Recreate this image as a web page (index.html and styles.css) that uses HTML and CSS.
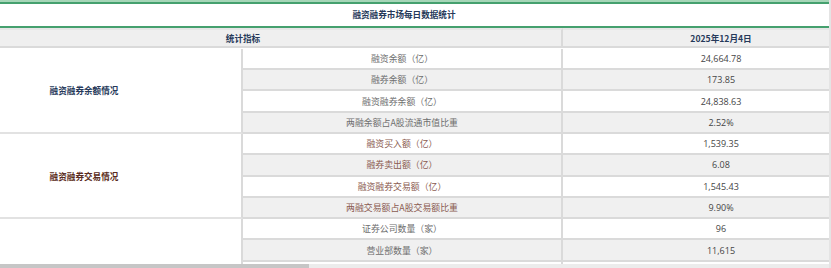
FILE: index.html
```html
<!DOCTYPE html>
<html lang="zh-CN">
<head>
<meta charset="utf-8">
<title>融资融券市场每日数据统计</title>
<link rel="stylesheet" href="styles.css">
</head>
<body>
<div class="frame">
  <div class="scroller">
    <div class="top-strip"></div>
    <div class="sheet" role="table">
      <div class="title" role="row"><span role="columnheader">融资融券市场每日数据统计</span></div>
      <div class="grid">
        <div class="hd span2" role="columnheader">统计指标</div>
        <div class="hd" role="columnheader">2025年12月4日</div>

        <div class="group g1 r4">融资融券余额情况</div>
        <div class="name n1">融资余额（亿）</div><div class="val">24,664.78</div>
        <div class="name n1 alt">融券余额（亿）</div><div class="val alt">173.85</div>
        <div class="name n1">融资融券余额（亿）</div><div class="val">24,838.63</div>
        <div class="name n1 alt">两融余额占A股流通市值比重</div><div class="val alt">2.52%</div>

        <div class="group g2 r4">融资融券交易情况</div>
        <div class="name n2">融资买入额（亿）</div><div class="val">1,539.35</div>
        <div class="name n2 alt">融券卖出额（亿）</div><div class="val alt">6.08</div>
        <div class="name n2">融资融券交易额（亿）</div><div class="val">1,545.43</div>
        <div class="name n2 alt">两融交易额占A股交易额比重</div><div class="val alt">9.90%</div>

        <div class="group g1 r3"></div>
        <div class="name n1">证券公司数量（家）</div><div class="val">96</div>
        <div class="name n1 alt">营业部数量（家）</div><div class="val alt">11,615</div>
        <div class="name n1"></div><div class="val"></div>
      </div>
    </div>
  </div>
  <div class="hscroll"><div class="thumb"></div></div>
</div>
</body>
</html>
```
FILE: styles.css
```css
html, body {
  margin: 0;
  padding: 0;
  background: #ffffff;
  overflow: hidden;
}

.frame {
  width: 829px;
  height: 268px;
  border-right: 2px solid #e4e4e4;
  display: flex;
  flex-direction: column;
  overflow: hidden;
}

.scroller {
  flex: 1;
  min-height: 0;
  overflow: hidden;
}

.top-strip {
  height: 2px;
  background: #a6d6b8;
}

.sheet {
  width: 954px;
  margin-left: -75px;
  font-family: "Noto Sans CJK SC", "Noto Sans", sans-serif;
}

.title {
  box-sizing: border-box;
  height: 25.5px;
  border-top: 2px solid #45a06e;
  border-bottom: 2px solid #45a06e;
  display: flex;
  align-items: center;
  justify-content: center;
  padding-left: 4px;
  padding-bottom: 1px;
  font-size: 8.6px;
  font-weight: 700;
  color: #26395a;
}

.grid {
  display: grid;
  grid-template-columns: 318px 320px 316px;
  grid-auto-rows: 21.3px;
}

.grid > div {
  box-sizing: border-box;
  display: flex;
  align-items: center;
  justify-content: center;
  border-bottom: 2px solid #dadada;
  white-space: nowrap;
}

.hd {
  height: 20.5px;
  border-top: 2px solid #e6e6e6;
  background: #efefef;
  font-size: 8.6px;
  font-weight: 700;
  color: #26395a;
  padding-top: 1px;
}

.span2 {
  grid-column: span 2;
  border-right: 2px solid #dadada;
}

.group {
  border-right: 2px solid #dadada;
  border-bottom-color: #e2e2e2 !important;
  font-size: 8.6px;
  font-weight: 700;
  background: #ffffff;
  padding-left: 2px;
}

.r4 { grid-row: span 4; }
.r3 { grid-row: span 3; }

.g1 { color: #26395a; }
.g2 { color: #5a2b20; }

.name {
  border-right: 2px solid #dadada;
  font-size: 8.9px;
  background: #ffffff;
}

.n1 { color: #6e6e6e; }
.n2 { color: #8a5b50; }

.val {
  font-family: "Open Sans", "Liberation Sans", sans-serif;
  font-size: 9px;
  color: #454545;
  background: #ffffff;
}

.alt { background: #f0f0f0 !important; }

.hscroll {
  height: 4px;
  background: #ececec;
  display: flex;
}

.thumb {
  width: 309px;
  background: #c6c6c6;
}
```
